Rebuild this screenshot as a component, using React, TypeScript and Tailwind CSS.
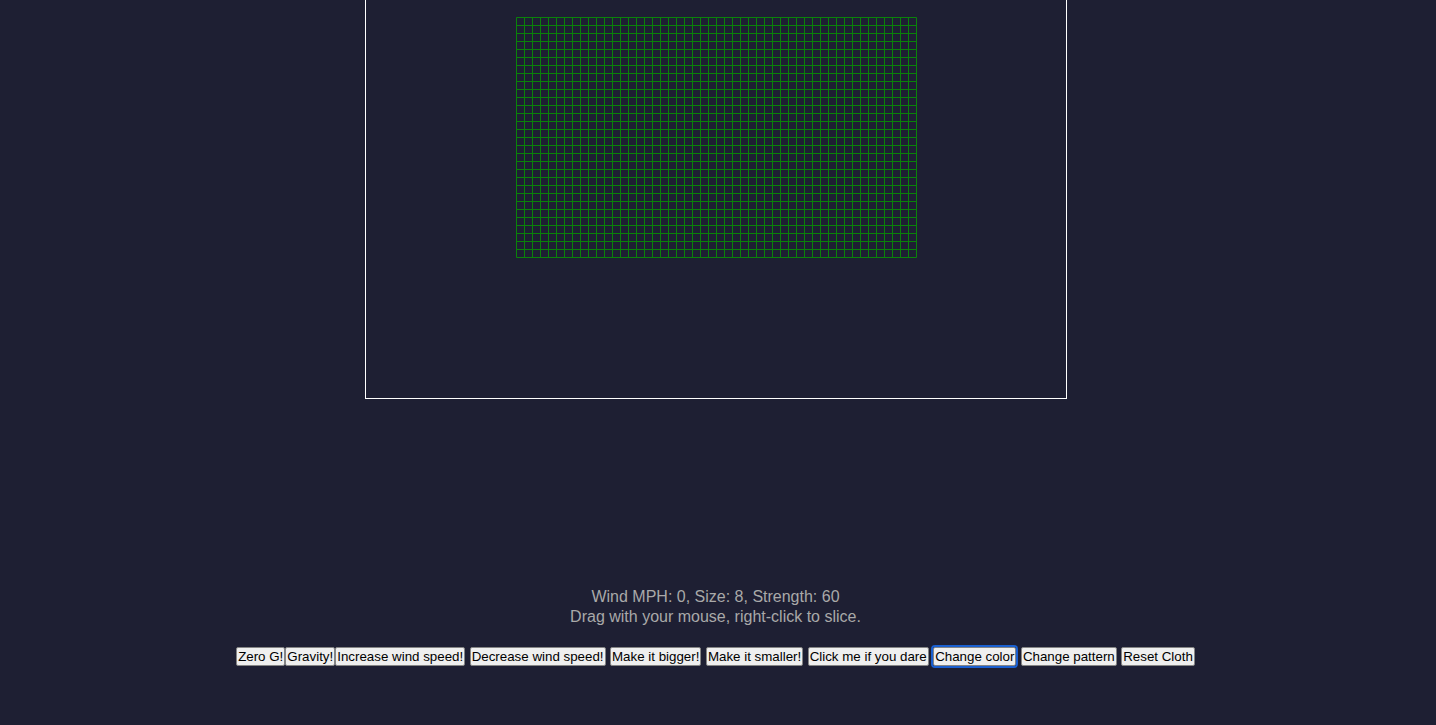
import React from 'react'

const COLS = 50
const ROWS = 30
const SPACING = 8
const OX = 150.5
const OY = 17.5

const buttons = [
  'Increase wind speed!',
  'Decrease wind speed!',
  'Make it bigger!',
  'Make it smaller!',
  'Click me if you dare',
  'Change color',
  'Change pattern',
  'Reset Cloth',
]

function Cloth() {
  const lines: React.ReactNode[] = []
  for (let c = 0; c <= COLS; c++) {
    const x = OX + c * SPACING
    lines.push(<line key={'v' + c} x1={x} y1={OY} x2={x} y2={OY + ROWS * SPACING} />)
  }
  for (let r = 0; r <= ROWS; r++) {
    const y = OY + r * SPACING
    lines.push(<line key={'h' + r} x1={OX} y1={y} x2={OX + COLS * SPACING} y2={y} />)
  }
  return (
    <svg width="700" height="398" className="block">
      <g stroke="#0a820a" strokeWidth="1">{lines}</g>
    </svg>
  )
}

const btn =
  'bg-[#efefef] text-black border border-[#858585] rounded-[2px] px-px py-px text-[13.33px] leading-[15px] font-["Liberation_Sans",Arial,sans-serif] align-bottom'

export default function App() {
  return (
    <div className="min-h-screen bg-[#1e1f33] flex flex-col items-center pr-[5px] font-['Liberation_Sans',Arial,sans-serif]">
      {/* canvas, top edge scrolled out of view */}
      <div className="w-[702px] h-[399px] border-x border-b border-white">
        <Cloth />
      </div>

      {/* Stats */}
      <div className="mt-[188px] text-center text-[16px] leading-[20px] text-[#a9a9a9]">
        <p>Wind MPH: 0, Size: 8, Strength: 60</p>
        <p>Drag with your mouse, right-click to slice.</p>
      </div>

      {/* Controls */}
      <div className="mt-[19px] text-center text-[16px] leading-[20px]">
        <button className={btn}>Zero G!</button><button className={btn}>Gravity!</button><button className={btn}>{buttons[0]}</button>
        {buttons.slice(1).map((b) => (
          <React.Fragment key={b}>
            {' '}
            <button
              className={
                b === 'Change color'
                  ? btn + ' outline outline-2 outline-offset-0 outline-[#1a5fd0]'
                  : btn
              }
            >
              {b}
            </button>
          </React.Fragment>
        ))}
      </div>
    </div>
  )
}
